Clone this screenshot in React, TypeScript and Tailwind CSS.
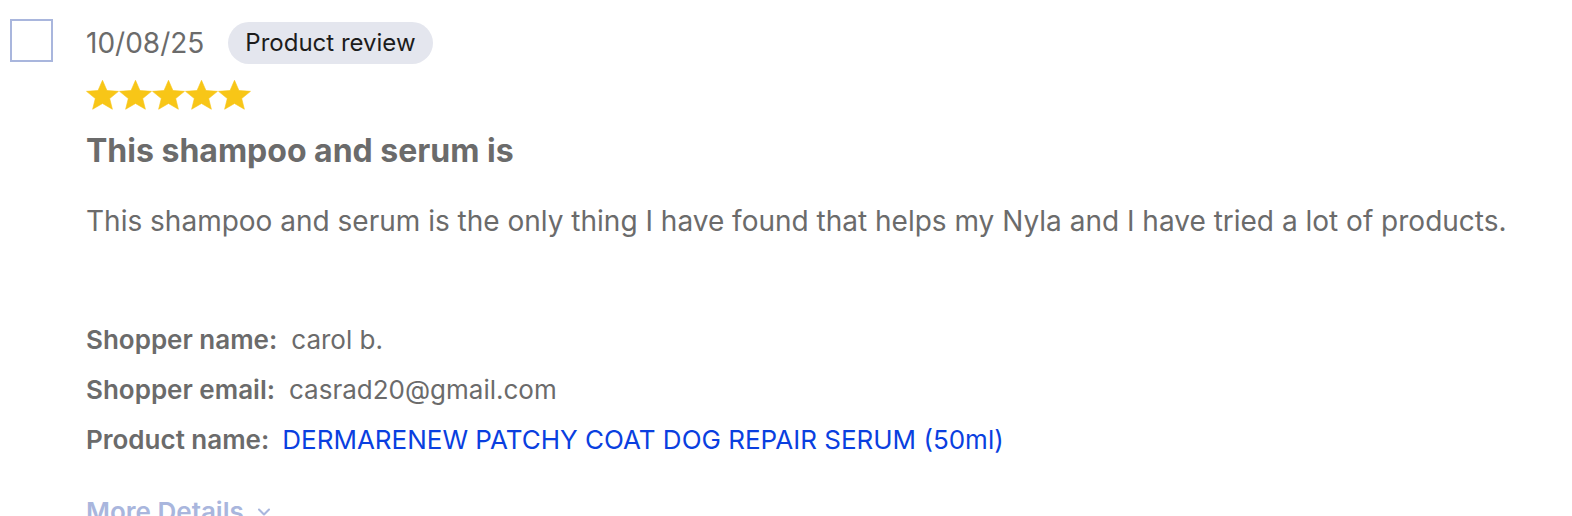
import React from "react";

function Star() {
  return (
    <svg width="33" height="30" viewBox="0 0 33 30" className="block">
      <path
        d="M16.5 0.3L20.94 10.48L32.48 11.36L23.69 18.52L26.37 29.24L16.5 23.5L6.63 29.24L9.31 18.52L0.52 11.36L12.06 10.48Z"
        fill="#f8c617"
        stroke="#f8c617"
        strokeWidth="0.6"
        strokeLinejoin="round"
      />
    </svg>
  );
}

export default function App() {
  return (
    <div
      className="w-[1572px] h-[516px] overflow-hidden bg-white flex"
      style={{ fontFamily: "Inter, 'Noto Sans', sans-serif" }}
    >
      <div className="pl-[10px] pt-[19px] w-[86px] shrink-0">
        <div className="w-[43px] h-[43px] border-2 border-[#a9b6dd] bg-white" />
      </div>
      <div className="flex flex-col pt-[22px]">
        <div className="flex items-center gap-[24px] h-[42px]">
          <span className="text-[28px] text-[#6b6b6b] leading-none">10/08/25</span>
          <span className="h-[42px] px-[17px] rounded-full bg-[#e4e6ee] text-[24px] text-[#1c1c1c] flex items-center">
            Product review
          </span>
        </div>
        <div className="flex mt-[16px] h-[30px]">
          <Star />
          <Star />
          <Star />
          <Star />
          <Star />
        </div>
        <div className="mt-[21px] text-[32px] font-bold text-[#6b6b6b] leading-[40px]">
          This shampoo and serum is
        </div>
        <div className="mt-[32px] text-[28px] text-[#6b6b6b] leading-[36px] whitespace-nowrap">
          This shampoo and serum is the only thing I have found that helps my Nyla and I have tried a lot of products.
        </div>
        <div className="mt-[85px] flex flex-col gap-[18px] text-[26px] leading-[32px] whitespace-nowrap">
          <div className="flex">
            <span className="font-semibold text-[#6b6b6b]">Shopper name:</span>
            <span className="ml-[14px] text-[#6b6b6b]">carol b.</span>
          </div>
          <div className="flex">
            <span className="font-semibold text-[#6b6b6b]">Shopper email:</span>
            <span className="ml-[14px] text-[#6b6b6b]">casrad20@gmail.com</span>
          </div>
          <div className="flex">
            <span className="font-semibold text-[#6b6b6b]">Product name:</span>
            <span className="ml-[13px] text-[#0a3fe0]">
              DERMARENEW PATCHY COAT DOG REPAIR SERUM (50ml)
            </span>
          </div>
        </div>
        <div className="mt-[40px] text-[26px] leading-[32px] font-semibold text-[#a9b6dd] flex items-center gap-[10px]">
          More Details
          <svg width="20" height="20" viewBox="0 0 24 24" fill="none" stroke="#a9b6dd" strokeWidth="2.5" strokeLinecap="round" strokeLinejoin="round">
            <path d="M6 9l6 6 6-6" />
          </svg>
        </div>
      </div>
    </div>
  );
}
